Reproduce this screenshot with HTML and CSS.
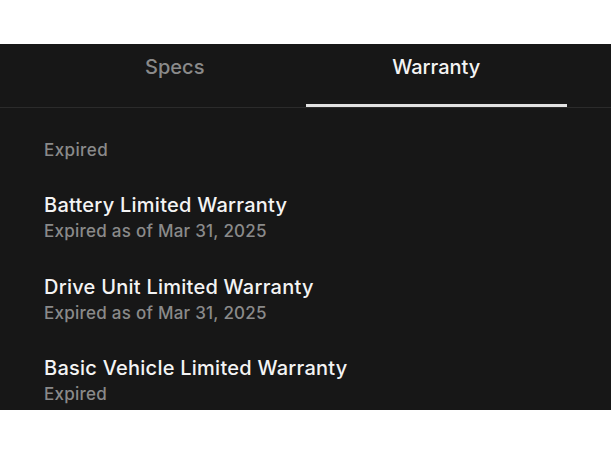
FILE: index.html
```html
<!DOCTYPE html>
<html lang="en">
<head>
    <meta charset="UTF-8">
    <meta name="viewport" content="width=device-width, initial-scale=1.0">
    <title>Vehicle Details</title>
    <link rel="stylesheet" href="styles.css">
</head>
<body>
    <div class="panel">
        <nav class="tabs">
            <div class="tab">Specs</div>
            <div class="tab active">Warranty</div>
        </nav>
        <main class="content">
            <div class="section-label">Expired</div>
            <div class="item">
                <div class="item-title">Battery Limited Warranty</div>
                <div class="item-sub">Expired as of Mar 31, 2025</div>
            </div>
            <div class="item">
                <div class="item-title">Drive Unit Limited Warranty</div>
                <div class="item-sub">Expired as of Mar 31, 2025</div>
            </div>
            <div class="item">
                <div class="item-title">Basic Vehicle Limited Warranty</div>
                <div class="item-sub">Expired</div>
            </div>
        </main>
    </div>
</body>
</html>
```

FILE: styles.css
```css
body {
    margin: 0;
    padding: 44px 0 0;
    background-color: #fff;
    font-family: Inter, "Open Sans", sans-serif;
}
.panel {
    height: 366px;
    overflow: hidden;
    background-color: #171717;
}
.tabs {
    display: flex;
    padding: 0 44px;
    border-bottom: 1px solid #2b2b2b;
}
.tab {
    flex: 1;
    height: 63px;
    padding-top: 11px;
    box-sizing: border-box;
    border-bottom: 3px solid transparent;
    text-align: center;
    font-size: 20px;
    line-height: 24px;
    font-weight: 500;
    color: #8a8a8a;
}
.tab.active {
    color: #f4f4f4;
    border-bottom-color: #e2e2e2;
}
.content {
    padding: 32px 44px 0;
}
.section-label {
    font-size: 17px;
    line-height: 20px;
    font-weight: 500;
    letter-spacing: 0.4px;
    color: #8a8a8a;
}
.item {
    margin-top: 33px;
}
.item + .item {
    margin-top: 31.5px;
}
.item-title {
    font-size: 20px;
    line-height: 24px;
    font-weight: 500;
    letter-spacing: 0.25px;
    color: #f4f4f4;
}
.item-sub {
    margin-top: 2px;
    font-size: 17px;
    line-height: 24px;
    font-weight: 500;
    letter-spacing: 0.25px;
    color: #8a8a8a;
}
```
